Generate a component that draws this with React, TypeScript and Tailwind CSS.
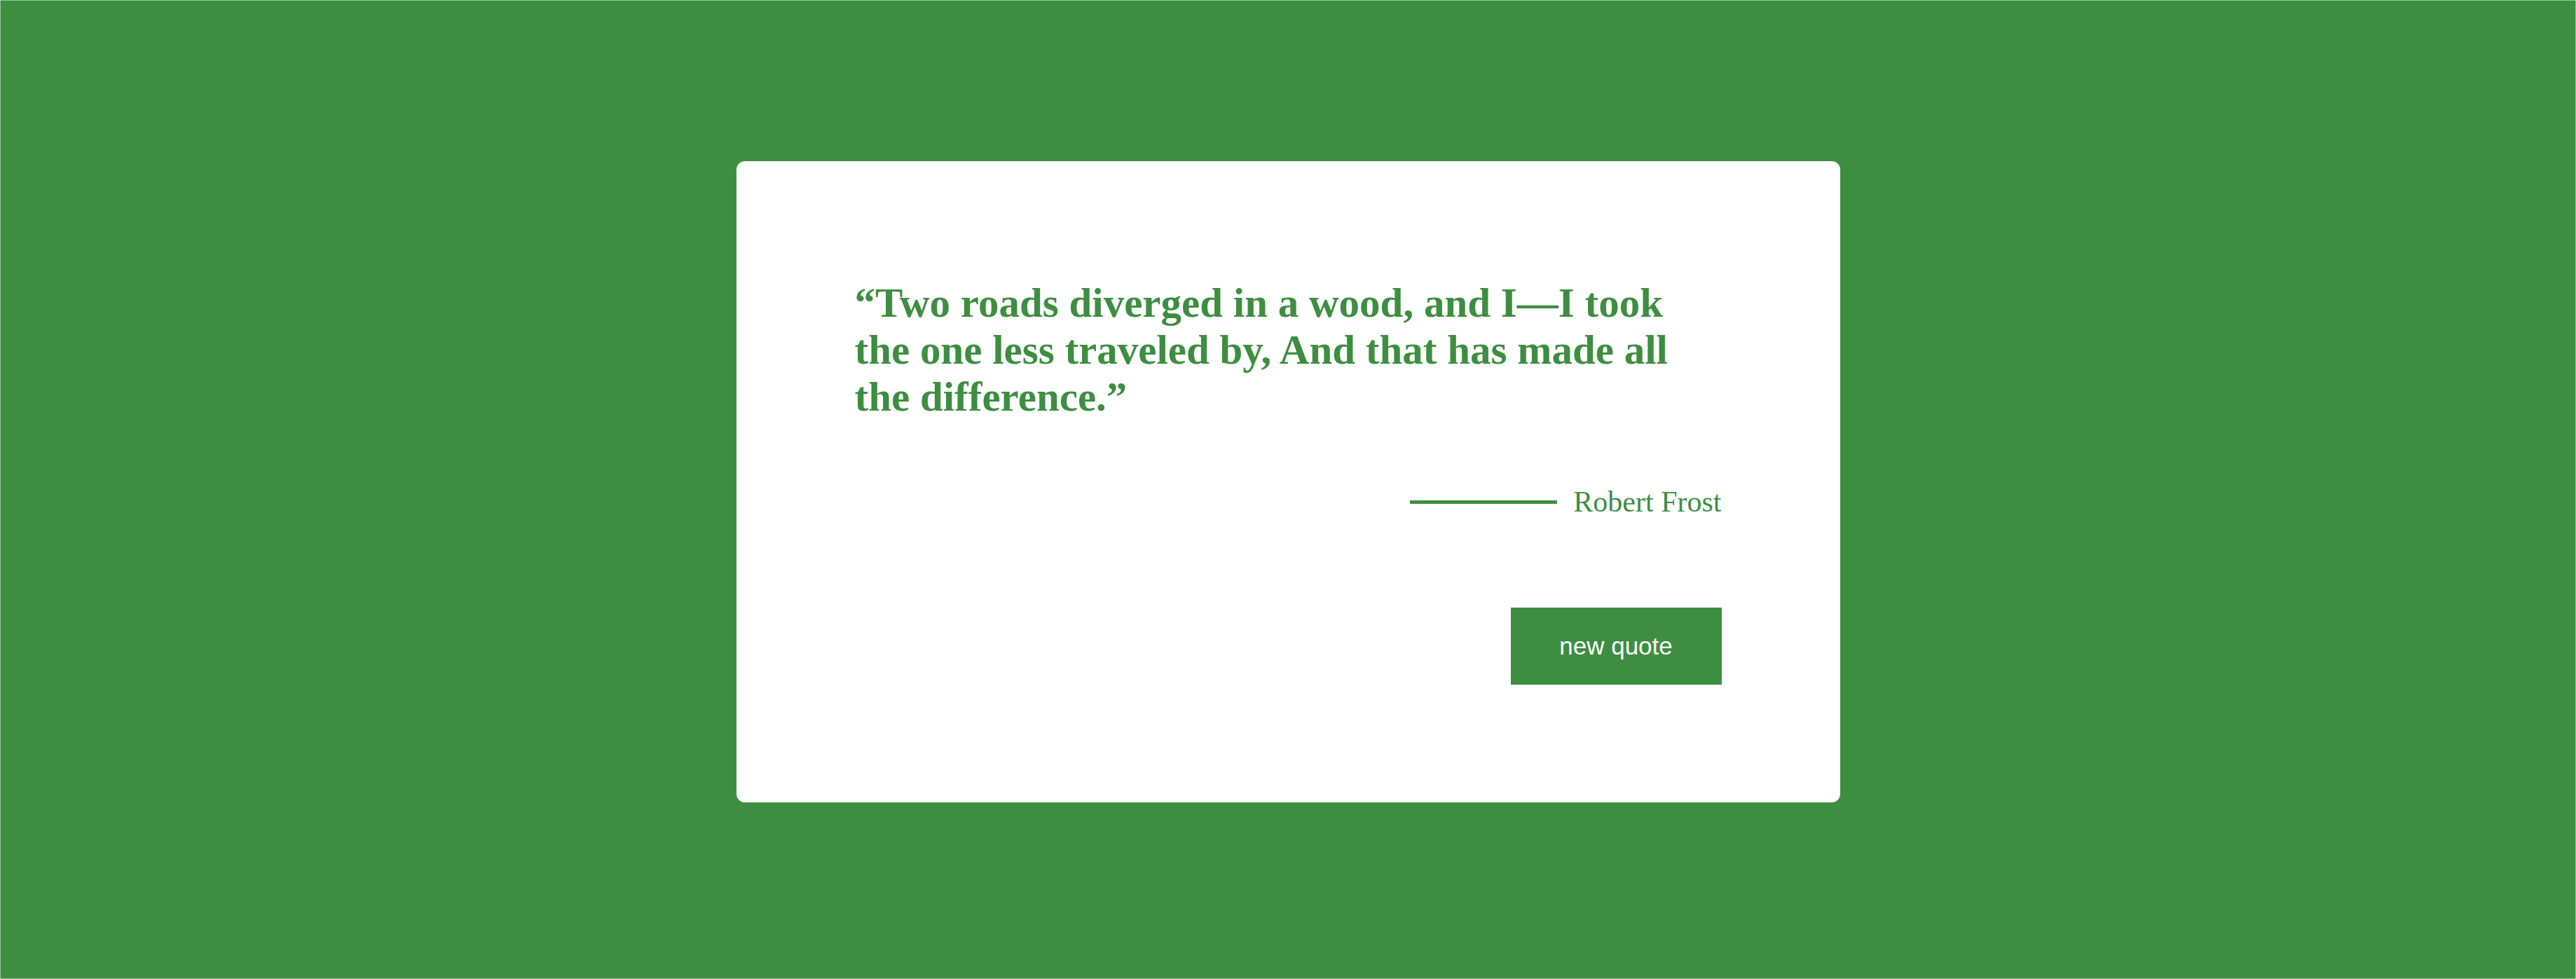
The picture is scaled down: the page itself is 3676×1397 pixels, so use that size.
const quote = {
  text: '“Two roads diverged in a wood, and I—I took the one less traveled by, And that has made all the difference.”',
  author: 'Robert Frost',
}

export default function App() {
  return (
    <div className="min-h-screen h-[1397px] bg-[#3e8e41] border border-[#9cc59d] pt-[229px]">
      <div className="mx-auto w-[1575px] bg-white rounded-[12px] px-[169px] pt-[169px] pb-[168px]">
        <p
          className="text-[59px] leading-[67px] font-bold text-[#3e8e41]"
          style={{ fontFamily: '"Liberation Serif", "Times New Roman", serif' }}
        >
          {quote.text}
        </p>

        <div className="mt-[92px] flex items-center justify-end gap-[23px] h-[48px]">
          <span className="block w-[210px] h-[5px] bg-[#3e8e41]" />
          <span
            className="text-[42px] leading-[48px] text-[#3e8e41]"
            style={{ fontFamily: '"Liberation Serif", "Times New Roman", serif' }}
          >
            {quote.author}
          </span>
        </div>

        <div className="mt-[127px] flex justify-end">
          <button
            className="w-[301px] h-[110px] bg-[#3e8e41] text-white text-[35px]"
            style={{ fontFamily: '"Liberation Sans", Arial, sans-serif' }}
          >
            new quote
          </button>
        </div>
      </div>
    </div>
  )
}
